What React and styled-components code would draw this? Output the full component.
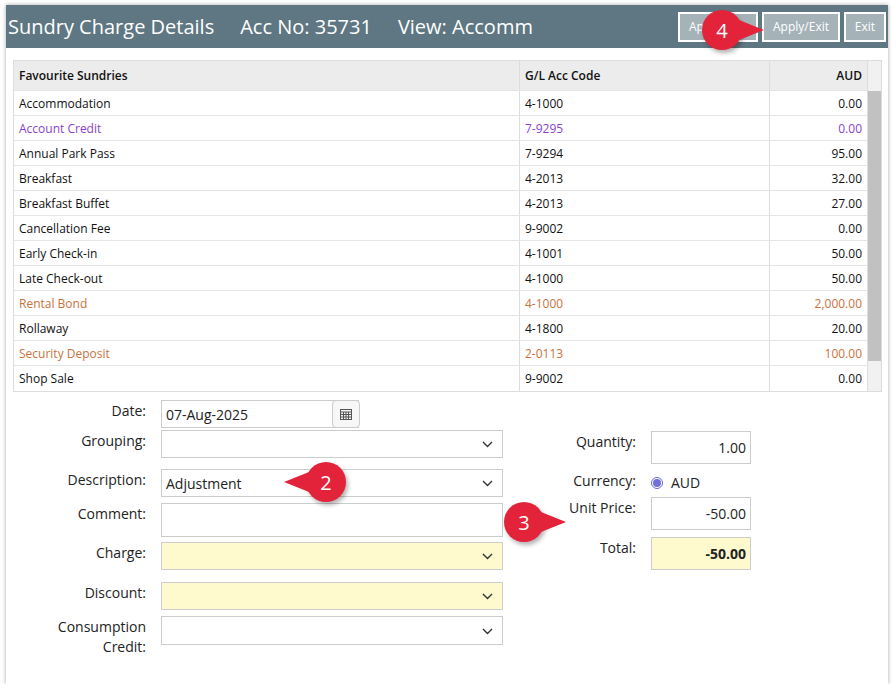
import React from "react";
import styled, { createGlobalStyle } from "styled-components";

const G = createGlobalStyle`
  html,body{margin:0;background:#fff;font-family:"Open Sans",sans-serif;}
`;
const Panel = styled.div`
  position:relative;margin:5px 8px 0 6px;width:882px;height:679px;background:#fff;
  box-shadow:0 0 4px rgba(0,0,0,.35);
`;
const Header = styled.div`
  height:43px;background:#5e7782;display:flex;align-items:center;padding-left:2px;color:#fff;
`;
const Title = styled.span`font-size:20px;margin-right:26px;`;
const Btns = styled.div`margin-left:auto;display:flex;gap:4px;padding-right:2px;`;
const Btn = styled.div`
  height:30px;border:2px solid #fff;background:#a5b3b8;color:#fff;font-size:12px;
  display:flex;align-items:center;justify-content:${p=>p.l?"flex-start":"center"};padding-left:${p=>p.l?9:0}px;
  box-sizing:border-box;width:${p=>p.w}px;
`;
const TableWrap = styled.div`margin:12px 6px 0 7px;border:1px solid #ddd;display:flex;`;
const Table = styled.div`flex:1;`;
const Scroll = styled.div`width:13px;background:#f1f1f1;border-left:1px solid #ddd;display:flex;flex-direction:column;`;
const Thumb = styled.div`margin-top:30px;height:270px;background:#c1c1c1;`;
const Row = styled.div`
  display:grid;grid-template-columns:505px 250px 1fr;height:${p=>p.h||25}px;
  border-bottom:1px solid #e5e5e5;box-sizing:border-box;font-size:12px;
  color:${p=>p.c||"#111"};font-weight:${p=>p.head?600:400};background:${p=>p.head?"#ececec":"#fff"};
  &:last-child{border-bottom:none;}
`;
const Cell = styled.div`
  display:flex;align-items:center;padding:0 5px;justify-content:${p=>p.r?"flex-end":"flex-start"};
  border-left:${p=>p.first?"none":"1px solid #ddd"};
`;
const Form = styled.div`display:flex;margin-top:8px;`;
const Col = styled.div`display:flex;flex-direction:column;width:${p=>p.w}px;`;
const FRow = styled.div`display:flex;margin-top:${p=>p.mt||0}px;`;
const Label = styled.div`
  box-sizing:border-box;flex:none;width:${p=>p.lw}px;text-align:right;font-size:14px;color:#222;padding-right:15px;padding-top:1px;line-height:20px;
`;
const Input = styled.div`
  position:relative;width:${p=>p.w}px;height:${p=>p.h||28}px;box-sizing:border-box;
  border:1px solid #ccc;background:${p=>p.y?"#fffacd":"#fff"};display:flex;align-items:center;
  justify-content:${p=>p.r?"flex-end":"flex-start"};padding:0 4px;font-size:14px;color:#222;
  font-weight:${p=>p.b?700:400};
`;
const Chev = styled.svg`position:absolute;right:9px;top:50%;margin-top:-3px;`;
const Cal = styled.div`
  position:absolute;right:-2px;top:-1px;width:26px;height:26px;border:1px solid #ccc;border-radius:4px;
  background:#f7f7f7;display:flex;align-items:center;justify-content:center;
`;
const Radio = styled.div`display:flex;align-items:center;gap:8px;font-size:14px;color:#222;padding-top:3px;`;
const Dot = styled.span`
  width:10px;height:10px;border-radius:50%;border:1px solid #6a6ad0;display:inline-flex;align-items:center;justify-content:center;
  &::after{content:"";width:8px;height:8px;border-radius:50%;background:#7070d8;}
`;
const Badge = styled.div`
  position:absolute;left:${p=>p.x}px;top:${p=>p.y}px;width:40px;height:40px;border-radius:50%;
  background:#e3233a;color:#fff;font-size:20px;display:flex;align-items:center;justify-content:center;
  box-shadow:2px 3px 4px rgba(0,0,0,.3);
  &::before{content:"";position:absolute;top:8px;${p=>p.left?"left:-22px;border-right:30px solid #e3233a;":"right:-22px;border-left:30px solid #e3233a;"}
    border-top:12px solid transparent;border-bottom:12px solid transparent;}
  span{position:relative;}
`;

const rows = [
  ["Accommodation","4-1000","0.00"],
  ["Account Credit","7-9295","0.00","#8a3fd0"],
  ["Annual Park Pass","7-9294","95.00"],
  ["Breakfast","4-2013","32.00"],
  ["Breakfast Buffet","4-2013","27.00"],
  ["Cancellation Fee","9-9002","0.00"],
  ["Early Check-in","4-1001","50.00"],
  ["Late Check-out","4-1000","50.00"],
  ["Rental Bond","4-1000","2,000.00","#c8723e"],
  ["Rollaway","4-1800","20.00"],
  ["Security Deposit","2-0113","100.00","#c8723e"],
  ["Shop Sale","9-9002","0.00"],
];
const Ch = () => <Chev width="11" height="7" viewBox="0 0 11 7"><path d="M1 1l4.5 4.5L10 1" stroke="#333" strokeWidth="1.4" fill="none"/></Chev>;

export default function App(){
  return <><G/><Panel>
    <Header>
      <Title>Sundry Charge Details</Title><Title>Acc No: 35731</Title><Title>View: Accomm</Title>
      <Btns><Btn w={80} l>Apply</Btn><Btn w={78}>Apply/Exit</Btn><Btn w={42}>Exit</Btn></Btns>
    </Header>
    <TableWrap>
      <Table>
        <Row head h={30}><Cell first>Favourite Sundries</Cell><Cell>G/L Acc Code</Cell><Cell r>AUD</Cell></Row>
        {rows.map(r=><Row key={r[0]} c={r[3]}><Cell first>{r[0]}</Cell><Cell>{r[1]}</Cell><Cell r>{r[2]}</Cell></Row>)}
      </Table>
      <Scroll><Thumb/></Scroll>
    </TableWrap>
    <Form>
      <Col w={497}>
        <FRow><Label lw={155}>Date:</Label><Input w={198}>07-Aug-2025<Cal><svg width="12" height="12" viewBox="0 0 12 12"><rect x="0.5" y="1.5" width="11" height="10" fill="none" stroke="#555"/><path d="M0.5 4h11M3.5 4v7.5M6 4v7.5M8.5 4v7.5M0.5 6.5h11M0.5 9h11" stroke="#555"/></svg></Cal></Input></FRow>
        <FRow mt={2}><Label lw={155}>Grouping:</Label><Input w={342}><Ch/></Input></FRow>
        <FRow mt={11}><Label lw={155}>Description:</Label><Input w={342}>Adjustment<Ch/></Input></FRow>
        <FRow mt={6}><Label lw={155}>Comment:</Label><Input w={342} h={34}/></FRow>
        <FRow mt={5}><Label lw={155}>Charge:</Label><Input w={342} y><Ch/></Input></FRow>
        <FRow mt={12}><Label lw={155}>Discount:</Label><Input w={342} y><Ch/></Input></FRow>
        <FRow mt={6}><Label lw={155}>Consumption<br/>Credit:</Label><Input w={342} h={29}><Ch/></Input></FRow>
      </Col>
      <Col w={260}>
        <FRow mt={31}><Label lw={148}>Quantity:</Label><Input w={100} h={33} r>1.00</Input></FRow>
        <FRow mt={6}><Label lw={148}>Currency:</Label><Radio><Dot/>AUD</Radio></FRow>
        <FRow mt={5}><Label lw={148}>Unit Price:</Label><Input w={100} h={33} r>-50.00</Input></FRow>
        <FRow mt={7}><Label lw={148}>Total:</Label><Input w={100} h={33} r y b>-50.00</Input></FRow>
      </Col>
    </Form>
    <Badge x={696} y={5}><span>4</span></Badge>
    <Badge x={300} y={457} left><span>2</span></Badge>
    <Badge x={498} y={497}><span>3</span></Badge>
  </Panel></>;
}
